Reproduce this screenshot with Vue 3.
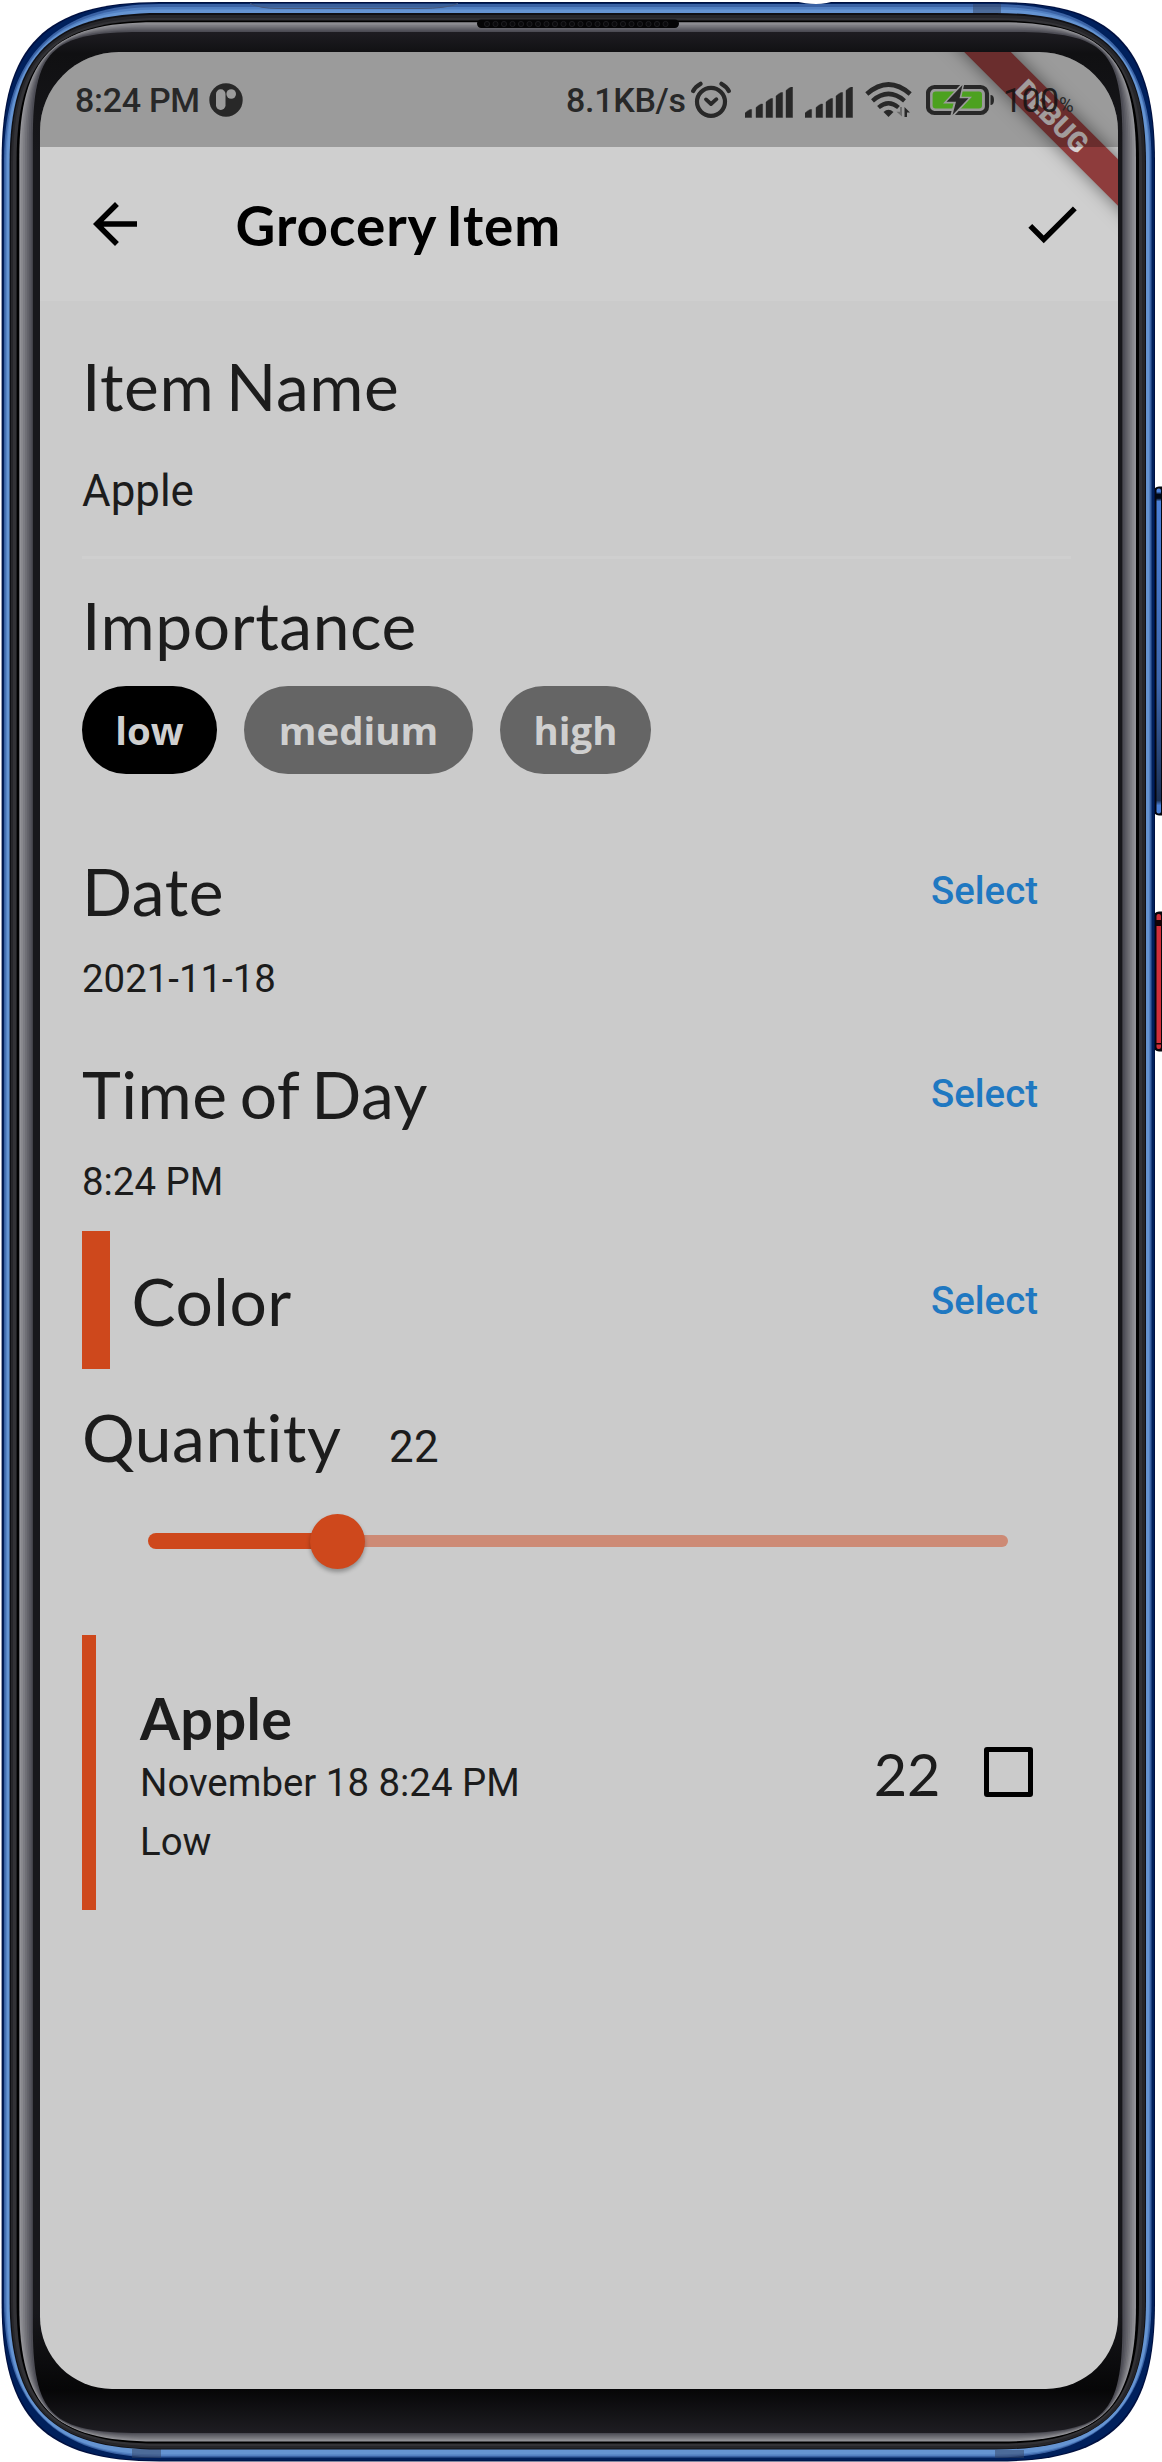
<script setup>
import { ref } from 'vue'

const levels = ref(['low', 'medium', 'high'])
const selected = ref('low')
const quantity = ref(22)

// Rounded outline with soft, squircle-like corners.
// r: where the corner starts, q: control point distance from the edge.
function outline(x1, y1, x2, y2, r, q) {
  return `M${x1} ${y1 + r}C${x1} ${y1 + q} ${x1 + q} ${y1} ${x1 + r} ${y1}H${x2 - r}C${x2 - q} ${y1} ${x2} ${y1 + q} ${x2} ${y1 + r}V${y2 - r}C${x2} ${y2 - q} ${x2 - q} ${y2} ${x2 - r} ${y2}H${x1 + r}C${x1 + q} ${y2} ${x1} ${y2 - q} ${x1} ${y2 - r}Z`
}

const shells = [
  { d: outline(1.6, 2, 1155, 2461.5, 158, 43), fill: '#001040' },
  { d: outline(2.6, 3, 1154, 2460.5, 157, 44), fill: '#00205c' },
  { d: outline(4, 4, 1151.5, 2457.5, 156, 52), fill: '#3a62a4' },
  { d: outline(5.5, 7, 1150, 2456, 154, 50), fill: '#5280c2' },
  { d: outline(6.8, 9.5, 1149, 2454.5, 153, 47), fill: '#6594d2' },
  { d: outline(9.6, 13, 1146, 2449.5, 150, 42), fill: '#101014' },
  { d: outline(11, 15, 1145, 2448.5, 148, 41), fill: '#26262a' },
  { d: outline(13, 18, 1142, 2446, 146, 39), fill: '#323236' },
  { d: outline(16.6, 20.5, 1139, 2443.6, 141, 37), fill: '#000' },
]

const rims = ['#929297', '#88888d', '#7c7c82', '#707076', '#64646b', '#585860', '#4c4c54'].map((fill, i) => ({
  fill,
  d: outline(19.3 + i * 1.9, 22.2 + i * 1.4, 1136 - i * 1.9, 2441.6 - i * 1.25, 136 - i * 4, 34 - i * 2.4),
}))

const bars = [
  [0, 22.5], [11, 17], [21, 11.5], [31, 5.5], [41, 0],
]
const holes = Array.from({ length: 22 }, (_, i) => 487 + i * 8.5)
</script>

<template>
  <div class="phone">
    <svg class="frame" width="1162" height="2462" viewBox="0 0 1162 2462">
      <defs>
        <linearGradient id="panel" x1="0" y1="0" x2="0" y2="1">
          <stop offset="0" stop-color="#1e1d22" />
          <stop offset="0.009" stop-color="#101012" />
          <stop offset="0.05" stop-color="#17171b" />
          <stop offset="0.95" stop-color="#17171b" />
          <stop offset="0.982" stop-color="#060607" />
          <stop offset="1" stop-color="#1e1d22" />
        </linearGradient>
        <linearGradient id="volume" x1="0" y1="0" x2="0" y2="1">
          <stop offset="0" stop-color="#4a7fd6" />
          <stop offset="0.01" stop-color="#4a7fd6" />
          <stop offset="0.018" stop-color="#000818" />
          <stop offset="0.03" stop-color="#000818" />
          <stop offset="0.04" stop-color="#4a7fd6" />
          <stop offset="0.6" stop-color="#3d66ac" />
          <stop offset="0.96" stop-color="#1b3054" />
          <stop offset="0.975" stop-color="#4a7fd6" />
          <stop offset="1" stop-color="#4a7fd6" />
        </linearGradient>
      </defs>
      <rect x="1153" y="486.500" width="14" height="329" rx="6" fill="#05060c" />
      <rect x="1156.500" y="488.500" width="4.500" height="325" rx="2" fill="url(#volume)" />
      <rect x="1153" y="911.500" width="14" height="140" rx="6" fill="#05060c" />
      <rect x="1156.500" y="914" width="4.500" height="135" rx="2" fill="#cf2f3a" />
      <rect x="1156" y="920" width="6" height="6" fill="#120306" />
      <rect x="1156" y="1043" width="6" height="1.500" fill="#120306" />
      <path v-for="(s, i) in shells.slice(0, 5)" :key="'s' + i" :d="s.d" :fill="s.fill" />
      <path d="M250 3.500Q260 8.500 278 8.500H420Q447 8.500 458 3.500Z" fill="#3c5f95" opacity=".6" />
      <path d="M250 3.500Q260 8.500 278 8.500H420Q447 8.500 458 3.500" fill="none" stroke="#46587c" stroke-width="1" />
      <path d="M973 4H1001V13H973ZM132 2449H161V2458H132ZM995 2450H1024V2458H995Z" fill="#33425f" opacity=".5" />
      <path d="M794 0H838Q826 4 816 4T794 1Z" fill="#fff" />
      <path v-for="(s, i) in shells.slice(5)" :key="'d' + i" :d="s.d" :fill="s.fill" />
      <path v-for="(s, i) in rims" :key="'r' + i" :d="s.d" :fill="s.fill" />
      <path :d="outline(32.8, 32, 1122.4, 2433, 108, 18)" fill="url(#panel)" />
      <rect x="477" y="19.500" width="202" height="8.500" rx="4.200" fill="#050506" />
      <circle v-for="x in holes" :key="x" :cx="x" cy="24" r="2.600" fill="#0a0a0c" stroke="#232326" stroke-width=".8" />
    </svg>

    <main class="screen">
      <div class="ribbon"><span>DEBUG</span></div>

      <header class="status">
        <div class="status-left">
          <span class="status-text clock">8:24 PM</span>
          <svg width="34" height="34" viewBox="0 0 34 34">
            <circle cx="17" cy="17" r="16.700" fill="#282828" />
            <rect x="7" y="6.300" width="9.500" height="20.600" rx="4.700" fill="#9b9b9b" />
            <circle cx="22.200" cy="11" r="4.800" fill="#9b9b9b" />
          </svg>
        </div>
        <div class="status-right">
          <span class="status-text speed">8.1KB/s</span>
          <svg class="alarm" width="40" height="38" viewBox="0 0 40 38" fill="none" stroke="#282828" stroke-linecap="round">
            <circle cx="20" cy="20.800" r="14" stroke-width="4.200" />
            <path d="M15 18.400L20 23L25.400 18.200" stroke-width="3.800" stroke-linejoin="round" />
            <path d="M2.200 10Q4.500 5.500 9.500 2.800M37.800 10Q35.500 5.500 30.500 2.800" stroke-width="4.200" />
          </svg>
          <svg v-for="n in 2" :key="n" class="signal" width="48" height="31" viewBox="0 0 48 31">
            <path v-for="b in bars" :key="b[0]" :d="`M${b[0]} 30.500V${b[1] + 3.500}Q${b[0] + 2.500} ${b[1] + 1} ${b[0] + 5} ${b[1]}H${b[0] + 6.600}V30.500Z`" fill="#282828" stroke="#282828" stroke-width=".4" stroke-linejoin="round" />
          </svg>
          <svg class="wifi" width="48" height="36" viewBox="0 0 48 36" fill="none">
            <path d="M1.800 12Q23.500 -7 45.200 12" stroke="#282828" stroke-width="4.600" />
            <path d="M7.500 18.800Q23.500 5 39.500 18.800" stroke="#282828" stroke-width="4.400" />
            <path d="M13.500 25.500Q23.500 17 33.500 25.500" stroke="#282828" stroke-width="4.200" />
            <path d="M18.500 30Q23.500 25.500 28.500 30L23.500 35Z" fill="#282828" />
            <path d="M37 25V34.500L31.500 29.800H35V25Z" fill="#6c6c6c" />
            <path d="M39.500 35V25L45 30.500H42V35Z" fill="#282828" />
          </svg>
          <svg class="battery" width="70" height="34" viewBox="0 0 70 34">
            <rect x="2" y="4" width="59" height="26" rx="6.500" fill="none" stroke="#282828" stroke-width="4.200" />
            <path d="M64.500 12Q68 12 68 17T64.500 22Z" fill="#282828" />
            <rect x="6.600" y="8.500" width="49.400" height="17" rx="3" fill="#4ca11f" />
            <path d="M36 0L17 20.500H27.500L24 34H27L46 13.800H35.500L38.500 0Z" fill="#9b9b9b" />
            <path d="M36.500 2L20.500 18.800H30L26.500 32L42.500 15.300H33.500Z" fill="#282828" />
          </svg>
          <span class="level">100</span><span class="percent">%</span>
        </div>
      </header>

      <nav class="appbar">
        <svg width="66" height="66" viewBox="0 0 24 24"><path d="M20 11H7.830l5.590-5.590L12 4l-8 8 8 8 1.410-1.410L7.830 13H20v-2z" /></svg>
        <h1>Grocery Item</h1>
        <svg width="66" height="66" viewBox="0 0 24 24"><path d="M9 16.200L4.800 12l-1.400 1.400L9 19 21 7l-1.400-1.400L9 16.200z" /></svg>
      </nav>

      <section class="form">
        <h2>Item Name</h2>
        <div class="field">Apple</div>

        <h2 class="importance">Importance</h2>
        <div class="chips">
          <button v-for="l in levels" :key="l" :class="['chip', l, { on: selected === l }]" @click="selected = l">{{ l }}</button>
        </div>

        <div class="row date">
          <h2>Date</h2>
          <button class="select">Select</button>
        </div>
        <p class="value">2021-11-18</p>

        <div class="row time">
          <h2>Time of Day</h2>
          <button class="select">Select</button>
        </div>
        <p class="value">8:24 PM</p>

        <div class="row color">
          <span class="swatch"></span>
          <h2>Color</h2>
          <button class="select">Select</button>
        </div>

        <div class="quantity">
          <h2>Quantity</h2>
          <span>{{ quantity }}</span>
        </div>
        <div class="slider">
          <div class="active" :style="{ width: quantity + '%' }"></div>
          <div class="thumb"></div>
          <div class="rest"></div>
        </div>

        <article class="card">
          <span class="stripe"></span>
          <div class="info">
            <h3>Apple</h3>
            <p>November 18 8:24 PM</p>
            <p class="low-label">Low</p>
          </div>
          <span class="count">{{ quantity }}</span>
          <span class="checkbox"></span>
        </article>
      </section>
    </main>
  </div>
</template>

<style>
body {
  background: #fff;
  overflow: hidden;
}
</style>

<style scoped>
.phone {
  position: relative;
  box-sizing: border-box;
  width: 1162px;
  height: 2462px;
  padding: 52px 44px 73px 39.5px;
  overflow: hidden;
  font-family: Roboto, sans-serif;
}
.frame {
  position: absolute;
  inset: 0;
}
.screen {
  position: relative;
  width: 1078.500px;
  height: 2337px;
  overflow: hidden;
  border-radius: 79px 79px 72px 72px;
  background: linear-gradient(#cfcfcf 249px, #cbcbcb 249px);
  color: #1c1c1c;
}
h1, h2, h3, p {
  margin: 0;
}
button {
  border: 0;
  padding: 0;
  background: none;
}
svg {
  flex: none;
}
.ribbon {
  position: absolute;
  z-index: 1;
  top: 48px;
  left: 862px;
  width: 300px;
  height: 33px;
  transform: rotate(45deg);
  background: #8e3c3c;
  box-shadow: 0 0 17px rgba(0, 0, 0, .5);
  color: #d8d0d0;
  font-size: 28px;
  font-weight: 900;
  line-height: 33px;
  text-align: center;
}
.status {
  position: relative;
  z-index: 2;
  display: flex;
  justify-content: space-between;
  height: 95px;
  background: rgba(0, 0, 0, .25);
  color: #282828;
}
.status-left, .status-right {
  display: flex;
  align-items: center;
  height: 95px;
  white-space: nowrap;
}
.status-left {
  padding-left: 35.500px;
}
.status-text {
  font-size: 34px;
  font-weight: 500;
  line-height: 40px;
  letter-spacing: -.3px;
}
.clock {
  width: 134px;
}
.speed {
  width: 125px;
}
.status-right {
  padding-right: 44px;
}
.status-right .alarm {
  margin-right: 14px;
}
.signal {
  margin: 5px 12px 0 0;
}
.wifi {
  margin: 1px 13px 0 0;
}
.battery {
  margin-right: 7px;
}
.level {
  width: 56px;
  color: rgba(20, 20, 20, .9);
  font-size: 34px;
  letter-spacing: -.6px;
}
.percent {
  padding-top: 11px;
  width: 15px;
  font-size: 20px;
}
.appbar {
  display: flex;
  align-items: center;
  box-sizing: border-box;
  height: 154px;
  padding: 0 33px 0 42px;
  color: #000;
}
.appbar h1 {
  flex: 1;
  padding: 2px 0 0 88px;
  font: 700 54.900px/66px Lato, sans-serif;
  letter-spacing: .95px;
  word-spacing: -4px;
}
.form {
  display: flex;
  flex-direction: column;
  padding: 45px 47px 0 42.500px;
}
h2 {
  font: 400 65.900px/80px Lato, sans-serif;
  letter-spacing: .55px;
  word-spacing: -5.500px;
}
.field {
  margin-top: 39px;
  height: 90.500px;
  border-bottom: 3px solid #cfcfcf;
  font-size: 43.900px;
  line-height: 52px;
}
.importance {
  margin-top: 26.500px;
}
.chips {
  display: flex;
  gap: 27px;
  margin-top: 21px;
}
.chip {
  height: 88px;
  border-radius: 44px;
  background: #656565;
  color: #cfcfcf;
  font: 700 38.400px/87px "Open Sans", sans-serif;
}
.chip.on {
  background: #000;
}
.chip.low {
  width: 135px;
}
.chip.medium {
  width: 229px;
}
.chip.high {
  width: 151px;
}
.row {
  display: flex;
  align-items: center;
  justify-content: space-between;
}
.select {
  margin-right: 33px;
  color: #1f78c1;
  font: 500 38.400px/46px Roboto, sans-serif;
}
.date {
  margin-top: 77px;
}
.value {
  margin-top: 25px;
  font-size: 38.400px;
  line-height: 46px;
}
.time {
  margin-top: 52px;
}
.color {
  height: 137.500px;
  margin-top: 26px;
}
.swatch {
  width: 27.500px;
  height: 100%;
  background: #ce481c;
}
.color h2 {
  flex: 1;
  padding: 2px 0 0 22px;
}
.color .select {
  padding-top: 2px;
}
.quantity {
  display: flex;
  align-items: baseline;
  gap: 47.500px;
  margin-top: 28.500px;
}
.quantity span {
  font-size: 43.900px;
  letter-spacing: .4px;
}
.slider {
  display: flex;
  align-items: center;
  height: 55px;
  margin: 36.500px 63px 0 66px;
}
.active {
  height: 16.500px;
  border-radius: 8px 0 0 8px;
  background: #ce481c;
}
.thumb {
  position: relative;
  flex: none;
  width: 55px;
  height: 55px;
  margin: 0 -27.500px;
  border-radius: 50%;
  background: #ce481c;
  box-shadow: 0 3px 4px rgba(0, 0, 0, .3);
}
.rest {
  flex: 1;
  height: 11.500px;
  border-radius: 0 6px 6px 0;
  background: #cd8a75;
}
.card {
  display: flex;
  align-items: center;
  height: 275px;
  margin-top: 66px;
}
.stripe {
  width: 14px;
  height: 100%;
  background: #ce481c;
}
.info {
  flex: 1;
  padding: 3px 0 0 44px;
  font-size: 38.400px;
  line-height: 46px;
}
.info h3 {
  margin-bottom: 8.500px;
  font: 700 57.600px/69px Lato, sans-serif;
  letter-spacing: .4px;
}
.info .low-label {
  margin-top: 12.500px;
}
.count {
  padding-top: 3px;
  margin-right: 43px;
  font: 400 57.600px/69px Lato, sans-serif;
}
.checkbox {
  box-sizing: border-box;
  width: 49.500px;
  height: 49.500px;
  margin-right: 38px;
  border: 5.500px solid #000;
  border-radius: 3px;
}
</style>
